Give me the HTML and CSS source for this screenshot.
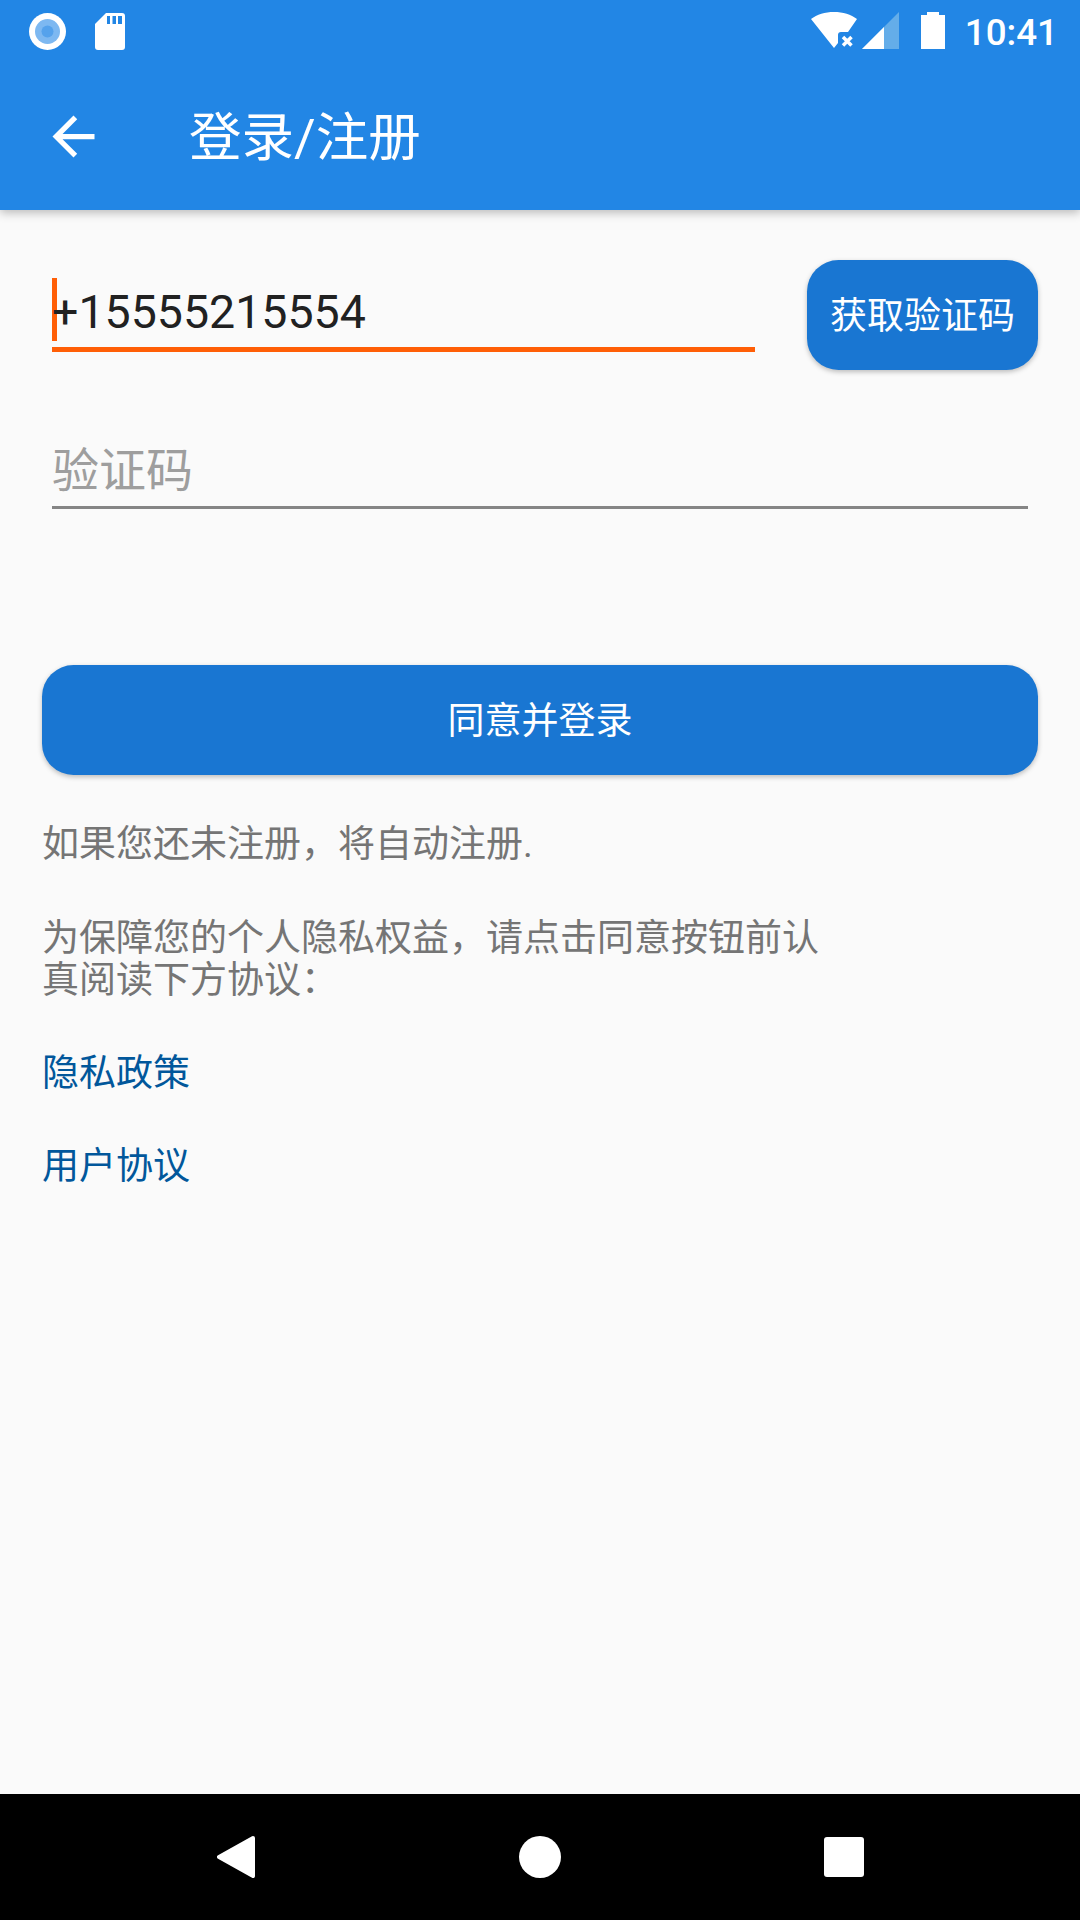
FILE: index.html
```html
<!DOCTYPE html>
<html lang="zh-CN">
<head>
    <meta charset="UTF-8">
    <meta name="viewport" content="width=device-width, initial-scale=1.0">
    <title>登录/注册</title>
    <link rel="stylesheet" href="styles.css">
</head>
<body>
    <div class="app">
        <header class="header">
            <div class="status-bar">
                <svg class="icon-record" width="37" height="37" viewBox="0 0 37 37">
                    <circle cx="18.5" cy="18.5" r="18.5" fill="#fff"/>
                    <circle cx="18.5" cy="18.5" r="12.5" fill="#7db8f1"/>
                    <circle cx="18.5" cy="18.500" r="6" fill="#55a2ec"/>
                </svg>
                <svg class="icon-sd" width="30" height="37" viewBox="0 0 30 37">
                    <path d="M11 0H27a3 3 0 0 1 3 3V34a3 3 0 0 1-3 3H3a3 3 0 0 1-3-3V11Z" fill="#fff"/>
                    <path d="M12 3h3v8h-3zM17.500 3h3.500v8h-3.500zM23 3h4v8h-4z" fill="#2286e5"/>
                </svg>
                <span class="status-spacer"></span>
                <svg class="icon-wifi" width="46" height="37" viewBox="0 0 46 37">
                    <path d="M0 7C6 2.500 14 0 23 0s17 2.500 23 7L37 20H30a3 3 0 0 0-3 3V31L23 36Z" fill="#fff"/>
                    <path d="M32 25l8.500 8.500M40.500 25L32 33.500" stroke="#fff" stroke-width="3.500" fill="none"/>
                </svg>
                <svg class="icon-signal" width="37" height="37" viewBox="0 0 37 37">
                    <path d="M37 0V37H0Z" fill="#64ade9"/>
                    <path d="M22 15V37H0Z" fill="#fff"/>
                </svg>
                <svg class="icon-battery" width="24" height="37" viewBox="0 0 24 37">
                    <path d="M6 3V0H18V3H24V37H0V3Z" fill="#fff"/>
                </svg>
                <span class="clock">10:41</span>
            </div>
            <div class="toolbar">
                <svg class="icon-back" width="63" height="63" viewBox="0 0 24 24">
                    <path d="M20 11H7.830l5.590-5.590L12 4l-8 8 8 8 1.410-1.410L7.830 13H20v-2z" fill="#fff"/>
                </svg>
                <h1 class="title">登录/注册</h1>
            </div>
        </header>

        <main class="content">
            <div class="phone-row">
                <div class="field field-active">
                    <span class="caret"></span>
                    <span class="field-text">+15555215554</span>
                </div>
                <button class="btn btn-code">获取验证码</button>
            </div>
            <div class="field field-code">
                <span class="field-hint">验证码</span>
            </div>
            <button class="btn btn-login">同意并登录</button>
            <p class="note note-first">如果您还未注册，将自动注册.</p>
            <p class="note note-second">为保障您的个人隐私权益，请点击同意按钮前认真阅读下方协议：</p>
            <a class="link link-first">隐私政策</a>
            <a class="link link-second">用户协议</a>
        </main>

        <nav class="nav-bar">
            <svg width="38" height="42" viewBox="0 0 38 42">
                <path d="M36 2 2 21 36 40Z" fill="#fff" stroke="#fff" stroke-width="4" stroke-linejoin="round"/>
            </svg>
            <span class="nav-home"></span>
            <span class="nav-recent"></span>
        </nav>
    </div>
</body>
</html>
```

FILE: styles.css
```css
* {
    box-sizing: border-box;
}

body {
    margin: 0;
    font-family: Roboto, "Noto Sans CJK SC", sans-serif;
    background-color: #fafafa;
}

.app {
    display: flex;
    flex-direction: column;
    width: 1080px;
    height: 1920px;
    overflow: hidden;
}

.header {
    height: 210px;
    background-color: #2286e5;
    box-shadow: 0 3px 9px rgba(0,0,0,0.25);
    color: white;
}

.status-bar {
    display: flex;
    align-items: center;
    height: 63px;
    padding: 0 22px 0 29px;
}

.icon-sd {
    margin-left: 29px;
}

.status-spacer {
    flex: 1;
}

.icon-wifi,
.icon-signal,
.icon-battery {
    margin-bottom: 2px;
}

.icon-signal {
    margin-left: 5px;
}

.icon-battery {
    margin-left: 22px;
}

.clock {
    margin-left: 20px;
    padding-top: 2px;
    font-size: 36.75px;
    font-weight: 500;
}

.toolbar {
    display: flex;
    align-items: center;
    height: 147px;
    padding-left: 42px;
}

.title {
    margin: 0 0 7px 84px;
    font-size: 52.5px;
    font-weight: 400;
}

.content {
    flex: 1;
    padding: 50px 42px 0;
}

.phone-row {
    display: flex;
    align-items: flex-start;
    justify-content: space-between;
    height: 109px;
}

.field {
    position: relative;
    margin-left: 10px;
    border-bottom: 3px solid #858585;
}

.field-active {
    width: 703px;
    height: 92px;
    border-bottom: 5px solid #ff5e06;
}

.field-code {
    width: 976px;
    height: 100px;
    margin-top: 40px;
}

.caret {
    position: absolute;
    top: 18px;
    left: 0;
    width: 5px;
    height: 63px;
    background-color: #ff5e06;
}

.field-text,
.field-hint {
    position: absolute;
    left: 0;
    line-height: 56px;
}

.field-text {
    top: 24px;
    color: #212121;
    font-size: 46.5px;
}

.field-hint {
    top: 34px;
    color: #9e9e9e;
    font-size: 47px;
}

.btn {
    border: none;
    border-radius: 31.5px;
    padding: 0 0 4px;
    background-color: #1976d2;
    color: white;
    font-family: inherit;
    font-size: 37px;
    box-shadow: 0 2px 5px rgba(0,0,0,0.25);
}

.btn-code {
    width: 231px;
    height: 110px;
}

.btn-login {
    display: block;
    width: 996px;
    height: 110px;
    margin-top: 156px;
}

.note {
    margin: 0;
    color: #757575;
    font-size: 37px;
    line-height: 42px;
}

.note-first {
    margin-top: 49px;
}

.note-second {
    width: 800px;
    margin-top: 52px;
}

.link {
    display: block;
    color: #01579b;
    font-size: 37px;
    line-height: 43px;
}

.link-first {
    margin-top: 50px;
}

.link-second {
    margin-top: 50px;
}

.nav-bar {
    display: flex;
    align-items: center;
    justify-content: space-between;
    height: 126px;
    padding: 0 216px 0 217px;
    background-color: black;
}

.nav-home {
    width: 42px;
    height: 42px;
    border-radius: 50%;
    background-color: white;
}

.nav-recent {
    width: 40px;
    height: 40px;
    border-radius: 3px;
    background-color: white;
}
```
